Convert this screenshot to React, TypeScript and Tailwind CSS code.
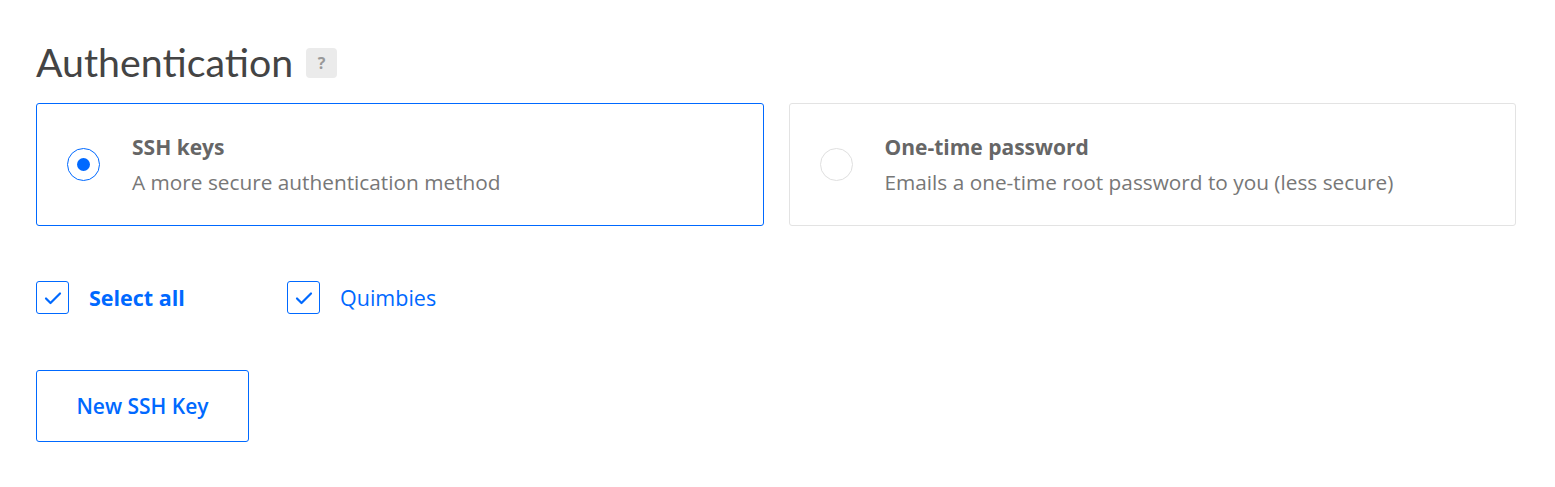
import React from "react";

function Radio({ checked }: { checked: boolean }) {
  return (
    <div
      className={
        "flex h-[33px] w-[33px] shrink-0 items-center justify-center rounded-full border " +
        (checked ? "border-[#0069ff]" : "border-[#dfdfdf]")
      }
    >
      {checked && <div className="h-[13px] w-[13px] rounded-full bg-[#0069ff]" />}
    </div>
  );
}

function Check() {
  return (
    <div className="flex h-[33px] w-[33px] shrink-0 items-center justify-center rounded-[3px] border border-[#0069ff]">
      <svg width="18" height="14" viewBox="0 0 18 14" fill="none">
        <path d="M2 7.5 L6.5 12 L16 2.5" stroke="#0069ff" strokeWidth="2.2" strokeLinecap="round" strokeLinejoin="round" />
      </svg>
    </div>
  );
}

export default function App() {
  return (
    <div
      className="min-h-[487px] bg-white pl-[36px] pr-[39px] pt-[38px]"
      style={{ fontFamily: "'Open Sans', 'Liberation Sans', sans-serif" }}
    >
      <div className="flex items-center gap-[13px]">
        <h1
          className="text-[39.3px] leading-[48px] text-[#444] font-normal"
          style={{ fontFamily: "Lato, 'Liberation Sans', sans-serif" }}
        >
          Authentication
        </h1>
        <span className="mt-[2px] flex h-[30px] w-[31px] items-center justify-center rounded-[4px] bg-[#ebebeb] text-[16px] font-bold text-[#999]">
          ?
        </span>
      </div>

      <div className="mt-[17px] grid grid-cols-2 gap-[25px]">
        <div className="flex h-[123px] items-center rounded-[3px] border border-[#0069ff] pl-[30px]">
          <Radio checked />
          <div className="ml-[32px] -mt-[2px]">
            <div className="text-[21px] font-bold leading-[28px] text-[#666]">SSH keys</div>
            <div className="mt-[8px] text-[20.8px] leading-[26px] text-[#777]">A more secure authentication method</div>
          </div>
        </div>
        <div className="flex h-[123px] items-center rounded-[3px] border border-[#e3e3e3] pl-[30px]">
          <Radio checked={false} />
          <div className="ml-[32px] -mt-[2px]">
            <div className="text-[21px] font-bold leading-[28px] text-[#666]">One-time password</div>
            <div className="mt-[8px] text-[20.8px] leading-[26px] text-[#777]">
              Emails a one-time root password to you (less secure)
            </div>
          </div>
        </div>
      </div>

      <div className="mt-[55px] flex items-center">
        <div className="flex w-[251px] items-center">
          <Check />
          <span className="ml-[20px] mt-[1px] text-[21.5px] font-bold text-[#0069ff]">Select all</span>
        </div>
        <div className="flex items-center">
          <Check />
          <span className="ml-[20px] mt-[1px] text-[21.5px] text-[#0069ff]">Quimbies</span>
        </div>
      </div>

      <button className="mt-[56px] flex h-[72px] w-[213px] items-center justify-center rounded-[3px] border border-[#0069ff] bg-white text-[21px] font-semibold text-[#0069ff]">
        New SSH Key
      </button>
    </div>
  );
}
